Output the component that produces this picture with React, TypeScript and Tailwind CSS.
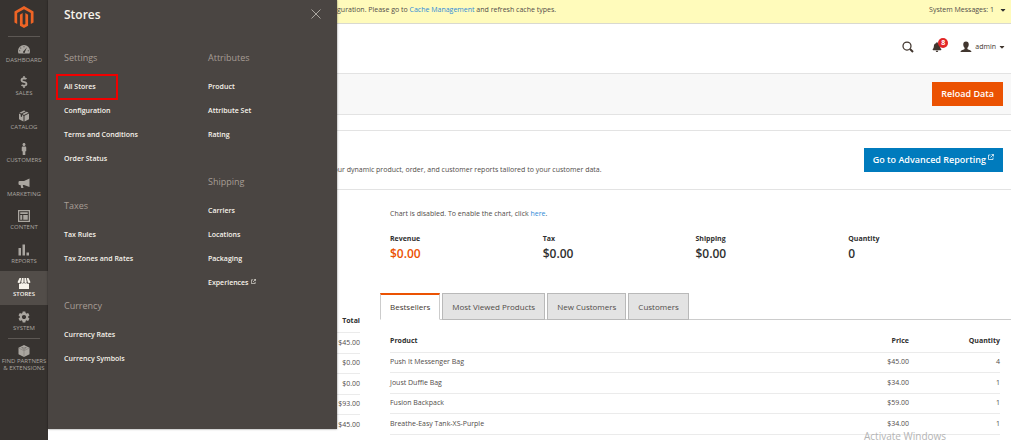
import React from 'react';
import { FaMagento, FaBell, FaDollarSign, FaMale, FaCaretDown } from 'react-icons/fa';
import { MdSettings } from 'react-icons/md';

interface NavItem {
  label: string;
  icon: React.ReactNode;
  active?: boolean;
}

interface MenuGroup {
  title: string;
  items: string[];
}

const DashboardIcon = () => (
  <svg className="w-3 h-3" viewBox="0 0 24 24" fill="currentColor">
    <path
      fillRule="evenodd"
      d="M12 4A12 12 0 0 0 0 16c0 2 .4 3.600 1 5h22c.6-1.400 1-3 1-5A12 12 0 0 0 12 4zM12 6.500a1.100 1.100 0 1 1 0 2.200a1.100 1.100 0 0 1 0-2.200zM5.500 9a1.100 1.100 0 1 1 0 2.200a1.100 1.100 0 0 1 0-2.200zM3.500 14.500a1.100 1.100 0 1 1 0 2.200a1.100 1.100 0 0 1 0-2.200zM20.500 14.500a1.100 1.100 0 1 1 0 2.200a1.100 1.100 0 0 1 0-2.200zM18 8.500l-4 9a2 2 0 1 1-2.500-1.500z"
    />
  </svg>
);

const BoxIcon = () => (
  <svg className="w-3 h-3" viewBox="0 0 24 24" fill="currentColor">
    <path d="M12 1l3.500 1.600-9 4.400L3 5.300zM17.500 3.500L21 5.300 12 10 8.500 8.100zM2 7l3.500 1.800v4l2.500 1.300v-4l3 1.600V23L2 18.500zM22 7v11.500L13 23V11.700z" />
  </svg>
);

const MarketingIcon = () => (
  <svg className="w-3 h-3" viewBox="0 0 24 24" fill="currentColor">
    <path d="M23 3v17l-11-4H9.500l1.500 6H6.500L5 16H2.500L1 14.500V9.500L2.500 8H12z" />
  </svg>
);

const ContentIcon = () => (
  <svg className="w-3 h-3" viewBox="0 0 24 24" fill="currentColor">
    <path fillRule="evenodd" d="M0 0h24v24H0zM2.500 2.500v19h19v-19z" />
    <path d="M4.500 4.500h15v3.500h-15zM4.500 10h4v9.500h-4zM10.500 10h9v9.500h-9z" />
  </svg>
);

const ReportsIcon = () => (
  <svg className="w-3 h-3" viewBox="0 0 24 24" fill="currentColor">
    <path d="M1 8h5v15H1zM9 1h5v22H9zM17 17h5v6h-5z" />
  </svg>
);

const StoresIcon = () => (
  <svg className="w-3.5 h-3" viewBox="0 0 28 24" fill="currentColor">
    <path d="M4 13c2 1 4 .5 5-.8 1.300 1.300 3.500 1.300 5 0 1.500 1.300 3.700 1.300 5 0 1 1.300 3 1.800 5 .8V24H4z" />
    <path d="M5 2h3.500L6.500 10.500c-.6 2-4.500 2-5.500 0zM10 2h3.200v8.500c-.5 1.700-4.300 1.700-4.800 0zM14.800 2H18l1.600 8.500c-.5 1.700-4.300 1.700-4.800 0zM19.500 2H23l4 8.500c-1 2-4.900 2-5.500 0z" />
  </svg>
);

const PartnersIcon = () => (
  <svg className="w-3 h-3" viewBox="0 0 24 24" fill="currentColor">
    <path d="M12 0l11 5.500v13L12 24 1 18.500v-13z" />
    <path d="M1.500 6L12 11.500 22.500 6M12 11.500V24" fill="none" stroke="#77736e" strokeWidth="1" />
    <path d="M6 5.500l3-1.500 3 1.500-3 1.500zM12 5.500L15 4l3 1.500L15 7zM9 8l3-1.500L15 8l-3 1.500z" fill="#77736e" />
  </svg>
);

const SearchIcon = () => (
  <svg className="w-3 h-3" viewBox="0 0 24 24" fill="none" stroke="currentColor">
    <circle cx="10" cy="10" r="8" strokeWidth="2.500" />
    <path d="M16 16L22 22" strokeWidth="4" />
  </svg>
);

const UserIcon = () => (
  <svg className="w-3 h-3" viewBox="0 0 24 24" fill="currentColor">
    <path d="M12 1c3.800 0 5.500 2.500 5.500 6 0 3-1.300 5.500-2.700 6.500v2.700c1 1.300 7.700 1.500 8.200 5.800H1c.5-4.300 7.200-4.500 8.200-5.800v-2.700C7.800 12.500 6.500 10 6.500 7c0-3.500 1.700-6 5.500-6z" />
  </svg>
);

const ExternalIcon = ({ className }: { className: string }) => (
  <svg className={className} viewBox="0 0 12 12" fill="none" stroke="currentColor" strokeWidth="1.500">
    <path d="M5 2H1v9h9V7M7 1h4v4M11 1L5 7" />
  </svg>
);

const navItems: NavItem[] = [
  { label: 'Dashboard', icon: <DashboardIcon /> },
  { label: 'Sales', icon: <FaDollarSign className="w-3 h-3" /> },
  { label: 'Catalog', icon: <BoxIcon /> },
  { label: 'Customers', icon: <FaMale className="w-3 h-3" /> },
  { label: 'Marketing', icon: <MarketingIcon /> },
  { label: 'Content', icon: <ContentIcon /> },
  { label: 'Reports', icon: <ReportsIcon /> },
  { label: 'Stores', icon: <StoresIcon />, active: true },
  { label: 'System', icon: <MdSettings className="w-3.5 h-3.5" /> },
];

const menuColumns: MenuGroup[][] = [
  [
    { title: 'Settings', items: ['All Stores', 'Configuration', 'Terms and Conditions', 'Order Status'] },
    { title: 'Taxes', items: ['Tax Rules', 'Tax Zones and Rates'] },
    { title: 'Currency', items: ['Currency Rates', 'Currency Symbols'] },
  ],
  [
    { title: 'Attributes', items: ['Product', 'Attribute Set', 'Rating'] },
    { title: 'Shipping', items: ['Carriers', 'Locations', 'Packaging', 'Experiences'] },
  ],
];

const orderTotals = ['$45.00', '$0.00', '$0.00', '$93.00', '$45.00'];

const summary = [
  { label: 'Revenue', value: '$0.00' },
  { label: 'Tax', value: '$0.00' },
  { label: 'Shipping', value: '$0.00' },
  { label: 'Quantity', value: '0' },
];

const tabs = ['Bestsellers', 'Most Viewed Products', 'New Customers', 'Customers'];

const products = [
  { name: 'Push It Messenger Bag', price: '$45.00', quantity: 4 },
  { name: 'Joust Duffle Bag', price: '$34.00', quantity: 1 },
  { name: 'Fusion Backpack', price: '$59.00', quantity: 1 },
  { name: 'Breathe-Easy Tank-XS-Purple', price: '$34.00', quantity: 1 },
];

const Sidebar = () => (
  <nav className="w-12 shrink-0 bg-[#373330] text-[#aaa6a0]">
    <div className="h-[37px] pt-1.5 flex justify-center">
      <FaMagento className="w-5 h-[22px] text-[#ee6425]" />
    </div>
    <hr className="mx-2 -mt-px border-[#5d5854]" />
    {navItems.map((item) => (
      <a
        key={item.label}
        href="#"
        className={`flex flex-col items-center pt-1.5 odd:h-[33px] even:h-[34px] ${
          item.active ? 'bg-[#524d49] text-[#f7f3eb] font-semibold' : ''
        }`}
      >
        <span className="h-3 flex items-center">{item.icon}</span>
        <span className="mt-px text-[6px] leading-[8px] uppercase">{item.label}</span>
      </a>
    ))}
    <hr className="mx-2 border-[#5d5854]" />
    <a href="#" className="flex flex-col items-center pt-1.5">
      <PartnersIcon />
      <span className="text-[6px] leading-[7px] mt-px uppercase text-center whitespace-nowrap">
        Find Partners
        <br />& Extensions
      </span>
    </a>
  </nav>
);

const StoresMenu = () => (
  <div className="absolute left-12 top-0 w-[289px] h-[429px] px-4 bg-[#4a4542] shadow-[0_0_2px_#00000080]">
    <div className="h-[50px] pt-[7px] flex items-start justify-between">
      <h2 className="text-[12px] leading-[16px] font-semibold text-[#f7f3eb]">Stores</h2>
      <button type="button" aria-label="Close" className="pt-0.5 text-[#aaa6a0]">
        <svg className="w-2.5 h-2.5" viewBox="0 0 10 10" stroke="currentColor" strokeWidth="1">
          <path d="M.5.5l9 9M9.500.5l-9 9" />
        </svg>
      </button>
    </div>
    <div className="flex">
      {menuColumns.map((groups, index) => (
        <div key={index} className="w-36 shrink-0 space-y-[27px]">
          {groups.map((group) => (
            <section key={group.title}>
              <h3 className="mb-[9px] text-[9px] leading-[16px] font-medium text-[#a79d95]">{group.title}</h3>
              <ul>
                {group.items.map((item) => (
                  <li key={item} className="relative h-6 flex items-center">
                    <a href="#" className="text-[7px] leading-[12px] font-semibold text-[#f7f3eb]">
                      {item}
                      {item === 'Experiences' && <ExternalIcon className="inline w-[5px] h-[5px] ml-0.5 mb-1" />}
                    </a>
                    {item === 'All Stores' && (
                      <span className="absolute -left-2 -top-px w-[62px] h-[26px] border-2 border-[#f00000]" />
                    )}
                  </li>
                ))}
              </ul>
            </section>
          ))}
        </div>
      ))}
    </div>
  </div>
);

const OrdersTable = () => (
  <table className="w-full mt-[121px] text-[7px] leading-[12px] text-right">
    <thead>
      <tr className="h-[21px] border-b border-[#ebebeb]">
        <th className="font-bold text-[#303030]">Total</th>
      </tr>
    </thead>
    <tbody>
      {orderTotals.map((total, index) => (
        <tr key={index} className="odd:h-[21px] even:h-[20px] border-b border-[#ebebeb] last:border-b-0">
          <td>{total}</td>
        </tr>
      ))}
    </tbody>
  </table>
);

const ProductsTable = () => (
  <table className="w-full text-[7px] leading-[12px]">
    <thead>
      <tr className="h-[21px] border-b border-[#ebebeb] text-[#303030]">
        <th className="font-bold text-left">Product</th>
        <th className="font-bold text-right">Price</th>
        <th className="w-[91px] font-bold text-right">Quantity</th>
      </tr>
    </thead>
    <tbody>
      {products.map((product) => (
        <tr key={product.name} className="odd:h-[20px] even:h-[21px] border-b border-[#ebebeb]">
          <td>{product.name}</td>
          <td className="text-right">{product.price}</td>
          <td className="text-right">{product.quantity}</td>
        </tr>
      ))}
    </tbody>
  </table>
);

export default function App() {
  return (
    <div className="relative flex min-h-screen overflow-hidden bg-white font-['Open_Sans',sans-serif] text-[#514c49]">
      <Sidebar />

      <main className="flex-1 min-w-0 pr-[13px] text-[7px] leading-[12px]">
        {/* System message */}
        <div className="h-6 pl-[272px] pr-[5px] flex items-center justify-between bg-[#fffbbb] border-b border-[#d9d9d0]">
          <p className="pb-1">
            Configuration. Please go to <a href="#" className="text-[#2f8bd8]">Cache Management</a> and refresh cache types.
          </p>
          <button type="button" className="pb-1 flex items-center gap-1.5">
            System Messages: 1 <FaCaretDown className="w-1.5 h-2 text-[#303030]" />
          </button>
        </div>

        {/* Header */}
        <header className="h-[49px] pr-1.5 pb-[3px] flex items-center justify-end gap-3 text-[#41362f]">
          <button type="button" aria-label="Search" className="mr-1.5">
            <SearchIcon />
          </button>
          <button type="button" aria-label="Notifications" className="relative w-4">
            <FaBell className="w-2.5 h-2.5" />
            <span className="absolute -top-1 left-1.5 w-2.5 h-2.5 rounded-full bg-[#e22626] text-white text-[7px] leading-[10px] font-bold text-center">
              8
            </span>
          </button>
          <button type="button" className="flex items-center">
            <UserIcon />
            <span className="ml-[3px] mr-[3px]">admin</span>
            <FaCaretDown className="w-1.5 h-2" />
          </button>
        </header>

        <div className="h-[42px] pr-2 flex items-center justify-end bg-[#f8f8f8] border-y border-[#e3e3e3]">
          <button type="button" className="h-6 px-[9px] bg-[#eb5202] text-white text-[9px] leading-[12px] font-semibold">
            Reload Data
          </button>
        </div>

        {/* Advanced reporting */}
        <section className="mt-[15px] h-[60px] pl-[282px] pr-2 flex justify-between border-y border-[#e3e3e3]">
          <p className="pt-[33px]">your dynamic product, order, and customer reports tailored to your customer data.</p>
          <a
            href="#"
            className="h-6 mt-[17px] px-[9px] flex items-center gap-0.5 bg-[#007bbd] text-white text-[9px] leading-[12px] font-semibold"
          >
            Go to Advanced Reporting
            <ExternalIcon className="w-1.5 h-1.5 mb-1.5" />
          </a>
        </section>

        <div className="flex">
          <div className="w-[312px] shrink-0 pl-4">
            <OrdersTable />
          </div>

          <div className="flex-1 min-w-0 ml-5 pt-[18px]">
            <div className="px-2.5">
              <p>
                Chart is disabled. To enable the chart, click <a href="#" className="text-[#2f8bd8]">here</a>.
              </p>
              <dl className="mt-3 grid grid-cols-4 text-[#303030]">
                {summary.map((item) => (
                  <div key={item.label}>
                    <dt className="leading-[14px] font-bold">{item.label}</dt>
                    <dd className={`text-[12px] leading-[16px] font-semibold ${item.label === 'Revenue' ? 'text-[#eb5202]' : ''}`}>
                      {item.value}
                    </dd>
                  </div>
                ))}
              </dl>
            </div>

            <div role="tablist" className="mt-[31px] flex items-end gap-0.5 border-b border-[#cccccc]">
              {tabs.map((tab, index) => (
                <button
                  key={tab}
                  type="button"
                  role="tab"
                  aria-selected={index === 0}
                  className={`h-[27px] px-[9px] -mb-px border text-[8px] leading-[12px] ${
                    index === 0
                      ? 'bg-white border-[#cccccc] border-b-white border-t-2 border-t-[#eb5202] text-[#41362f]'
                      : 'bg-[#e3e3e3] border-[#b9b9b9]'
                  }`}
                >
                  {tab}
                </button>
              ))}
            </div>

            <div className="pl-2.5 pr-[11px] pt-[11px]">
              <ProductsTable />
            </div>
          </div>
        </div>
      </main>

      <StoresMenu />

      <p className="absolute left-[864px] top-[431px] text-[10px] leading-[10px] text-[#b4b4b4]">Activate Windows</p>
    </div>
  );
}
